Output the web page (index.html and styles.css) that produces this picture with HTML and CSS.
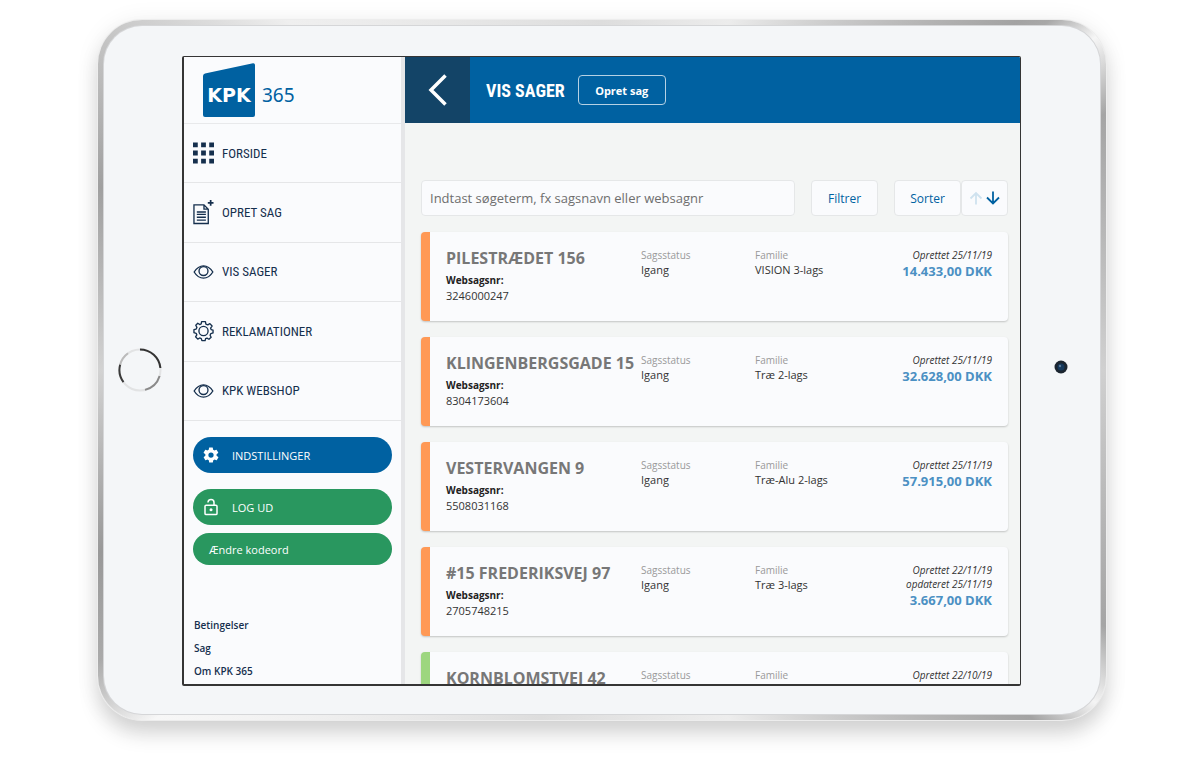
FILE: index.html
```html
<!DOCTYPE html>
<html lang="da">
<head>
<meta charset="utf-8">
<title>KPK 365 – Vis sager</title>
<link rel="stylesheet" href="styles.css">
</head>
<body>
<svg class="sprite" aria-hidden="true">
  <symbol id="eye" viewBox="0 0 22 22"><path d="M1.200 11C4 6.500 7.500 4.500 11 4.500S18 6.500 20.800 11C18 15.500 14.500 17.500 11 17.500S4 15.500 1.200 11Z"/><circle cx="11" cy="10" r="4.700"/></symbol>
</svg>
<div class="tablet">
  <div class="face">
    <div class="bezel-side">
      <svg class="home" viewBox="0 0 44 44" aria-hidden="true">
        <circle cx="22" cy="22" r="20.500" stroke="#e2e3e4"/>
        <path d="M22 1.500A20.500 20.500 0 0 1 42.400 20" stroke="#333"/>
        <path d="M41.600 28A20.500 20.500 0 0 1 27 41.900" stroke="#8a8a8a"/>
        <path d="M5.500 34.200A20.500 20.500 0 0 1 2.200 16.500" stroke="#3a3a3a"/>
        <path d="M2.200 16.500A20.500 20.500 0 0 1 10 5.300" stroke="#bbb"/>
      </svg>
    </div>
    <div class="screen">
      <aside class="sidebar">
        <div class="side-content">
          <a class="brand" href="#">
            <svg class="logo" viewBox="0 0 52 54" role="img" aria-label="KPK">
              <path d="M2 10.500L50 .200Q52 0 52 2V52Q52 54 50 54H2Q0 54 0 52V13Q0 11 2 10.500Z" fill="#0061a1"/>
              <text class="logo-text" x="26" y="39" text-anchor="middle">KPK</text>
            </svg>
            <span class="brand-number">365</span>
          </a>
          <nav class="nav">
            <a href="#"><svg class="icon solid" viewBox="0 0 22 22"><path d="M0 0h5v5H0zM8.500 0h5v5h-5zM17 0h5v5h-5zM0 8.500h5v5H0zM8.500 8.500h5v5h-5zM17 8.500h5v5h-5zM0 17h5v5H0zM8.500 17h5v5h-5zM17 17h5v5h-5z"/></svg>Forside</a>
            <a href="#"><svg class="icon tall" viewBox="0 0 22 26"><path d="M1 5H11.500L16 9.500V24.500H1ZM11.500 5V9.500H16"/><path d="M4 12.500H13.500M4 15H13.500M4 18H13.500M4 21H13.500"/><path class="plus" d="M18.500 0V6M15.500 3H21.500"/></svg>Opret sag</a>
            <a href="#"><svg class="icon"><use href="#eye"/></svg>Vis sager</a>
            <a href="#"><svg class="icon" viewBox="0 0 22 22"><path d="M9 1.200H13L13.500 3.700L15.500 4.600L17.700 3.300L20 5.800L18.400 7.900L19 9.500L21 10V13L18.700 13.700L17.900 15.400L19 17.500L16.700 19.600L14.700 18.400L13.200 19L12.700 21H9.300L8.700 19L7 18.300L5 19.500L2.700 17.100L4 15L3.300 13.500L1 12.800V9.500L3.300 9L4.100 7.200L2.900 5L5 2.900L7 4.200L8.600 3.600Z" stroke-linejoin="round"/><circle cx="11" cy="11" r="4.800"/></svg>Reklamationer</a>
            <a href="#"><svg class="icon"><use href="#eye"/></svg>KPK webshop</a>
          </nav>
          <div class="actions">
            <button class="pill settings" type="button"><svg viewBox="0 0 24 24"><path d="M19.400 13a7.500 7.500 0 0 0 0-2l2.100-1.700a.5.5 0 0 0 .1-.6l-2-3.500a.5.5 0 0 0-.6-.2l-2.500 1a7.300 7.300 0 0 0-1.700-1L14.400 2.400a.5.5 0 0 0-.5-.4h-4a.5.5 0 0 0-.5.4L9 5a7.700 7.700 0 0 0-1.700 1l-2.500-1a.5.5 0 0 0-.6.200l-2 3.500a.5.5 0 0 0 .1.600L4.500 11a7.900 7.900 0 0 0 0 2l-2.100 1.700a.5.5 0 0 0-.1.600l2 3.500c.1.200.4.300.6.200l2.500-1a7.300 7.300 0 0 0 1.700 1l.4 2.600c0 .2.200.4.500.4h4c.2 0 .5-.2.5-.4L15 19a7.700 7.700 0 0 0 1.700-1l2.500 1c.2.100.5 0 .6-.2l2-3.500a.5.5 0 0 0-.1-.6ZM12 15.500a3.500 3.500 0 1 1 0-7 3.500 3.500 0 0 1 0 7Z" fill="#fff"/></svg>INDSTILLINGER</button>
            <button class="pill logout" type="button"><svg viewBox="0 0 24 24" fill="none" stroke="#fff" stroke-width="2"><rect x="4" y="9.500" width="16" height="12.500" rx="1.500"/><path d="M8 6V5.500Q8.500 2 12 2Q16 2 16 6V9.500"/><circle cx="12" cy="15.800" r="2" fill="#fff" stroke="none"/></svg>LOG UD</button>
            <button class="pill password" type="button">Ændre kodeord</button>
          </div>
          <div class="links">
            <a href="#">Betingelser</a>
            <a href="#">Sag</a>
            <a href="#">Om KPK 365</a>
          </div>
        </div>
        <div class="scroll-thumb"></div>
      </aside>
      <main class="main">
        <header class="topbar">
          <button class="back" type="button" aria-label="Tilbage"><svg viewBox="0 0 20 32"><path d="M17.500 1.500L3 16L17.500 30.500" fill="none" stroke="#fff" stroke-width="3.500"/></svg></button>
          <h1>VIS SAGER</h1>
          <button class="create" type="button">Opret sag</button>
        </header>
        <div class="content">
          <form class="tools">
            <input class="search" type="text" aria-label="Søg" placeholder="Indtast søgeterm, fx sagsnavn eller websagnr">
            <button class="tool" type="button">Filtrer</button>
            <div class="sort">
              <button class="tool" type="button">Sorter</button>
              <button class="tool arrows" type="button" aria-label="Skift sortering"><svg viewBox="0 0 32 14" fill="none" stroke-width="1.800"><path d="M7 13.500V2M1.500 7.500L7 2L12.500 7.500" stroke="#cfe2ef"/><path d="M24 .500V12M18 6.500L24 12.500L30 6.500" stroke="#0061a1"/></svg></button>
            </div>
          </form>
          <article class="card">
            <div><h2>PILESTRÆDET 156</h2><b>Websagsnr:</b><p>3246000247</p></div>
            <div class="info"><span>Sagsstatus</span><p>Igang</p></div>
            <div class="info"><span>Familie</span><p>VISION 3-lags</p></div>
            <div class="sum"><em>Oprettet 25/11/19</em><strong>14.433,00 DKK</strong></div>
          </article>
          <article class="card">
            <div><h2>KLINGENBERGSGADE 15</h2><b>Websagsnr:</b><p>8304173604</p></div>
            <div class="info"><span>Sagsstatus</span><p>Igang</p></div>
            <div class="info"><span>Familie</span><p>Træ 2-lags</p></div>
            <div class="sum"><em>Oprettet 25/11/19</em><strong>32.628,00 DKK</strong></div>
          </article>
          <article class="card">
            <div><h2>VESTERVANGEN 9</h2><b>Websagsnr:</b><p>5508031168</p></div>
            <div class="info"><span>Sagsstatus</span><p>Igang</p></div>
            <div class="info"><span>Familie</span><p>Træ-Alu 2-lags</p></div>
            <div class="sum"><em>Oprettet 25/11/19</em><strong>57.915,00 DKK</strong></div>
          </article>
          <article class="card">
            <div><h2>#15 FREDERIKSVEJ 97</h2><b>Websagsnr:</b><p>2705748215</p></div>
            <div class="info"><span>Sagsstatus</span><p>Igang</p></div>
            <div class="info"><span>Familie</span><p>Træ 3-lags</p></div>
            <div class="sum"><em>Oprettet 22/11/19</em><em>opdateret 25/11/19</em><strong>3.667,00 DKK</strong></div>
          </article>
          <article class="card done">
            <div><h2>KORNBLOMSTVEJ 42</h2></div>
            <div class="info"><span>Sagsstatus</span></div>
            <div class="info"><span>Familie</span></div>
            <div class="sum"><em>Oprettet 22/10/19</em></div>
          </article>
        </div>
      </main>
    </div>
    <div class="bezel-side">
      <svg class="camera" viewBox="0 0 14 14" aria-hidden="true"><circle cx="7" cy="7" r="6.500" fill="#1b2530"/><circle cx="7" cy="7" r="3.500" fill="#14385c"/><circle cx="6" cy="6" r="1.200" fill="#5d7b98"/></svg>
    </div>
  </div>
</div>
</body>
</html>
```
FILE: styles.css
```css
* { box-sizing: border-box; }
body {
  margin: 0;
  height: 100vh;
  padding: 20px 94px 51px 98px;
  background: #fff;
  font-family: "Open Sans", "Noto Sans", sans-serif;
  font-size: 12px;
  color: #333;
}
h1, h2, p { margin: 0; }
a { color: inherit; text-decoration: none; }
button { font: inherit; cursor: pointer; }
.sprite { display: none; }

.tablet {
  height: 100%;
  padding: 6px;
  border-radius: 44px;
  background: conic-gradient(from 0deg, #ddd 0deg, #ececec 20deg, #a3a3a3 50deg, #a8a8a8 52deg, #f6f6f6 56deg, #a5a5a5 63deg, #d0d0d0 90deg, #a5a5a5 117deg, #f4f4f4 124deg, #a3a3a3 129deg, #ededed 160deg, #ddd 190deg, #f7f7f7 232deg, #aaa 240deg, #999 250deg, #d2d2d2 270deg, #a0a0a0 290deg, #c5c5c5 304deg, #efefef 318deg, #ddd 360deg);
  box-shadow: 0 0 0 1px #ededed, 0 2px 26px rgba(0, 0, 0, .07), 0 14px 20px rgba(0, 0, 0, .15);
}
.face {
  display: grid;
  grid-template-columns: 78px minmax(0, 1fr) 79px;
  height: 100%;
  padding: 30px 0 28px;
  border-radius: 38px;
  background: #f4f6f8;
  box-shadow: 0 0 0 1px #d5d6d8;
}
.bezel-side { display: flex; align-items: center; justify-content: center; }
.home { width: 44px; height: 44px; margin: 0 6px 2px 0; fill: none; stroke-width: 2; }
.camera { width: 14px; height: 14px; margin-bottom: 8px; }
.screen {
  display: grid;
  grid-template-columns: 221px minmax(0, 1fr);
  min-height: 0;
  overflow: hidden;
  border: solid #353535;
  border-width: 1px 1px 2px 2px;
  border-radius: 2px;
  background: #f3f5f4;
}

.sidebar { display: flex; min-height: 0; background: #fafbfd; }
.side-content { flex: 1; }
.scroll-thumb { width: 4px; height: calc(100% - 36px); background: #e5e6e8; border-radius: 0 0 2px 2px; }
.brand {
  display: flex;
  align-items: center;
  gap: 7px;
  height: 67px;
  padding-left: 19px;
  border-bottom: 1px solid #e8e9eb;
}
.logo { width: 52px; height: 54px; }
.logo-text { font: bold 19px "DejaVu Sans", sans-serif; fill: #fff; }
.brand-number { padding-top: 10px; font: 19px "Noto Sans", sans-serif; color: #0061a1; }
.nav { display: grid; grid-auto-rows: 1fr; min-height: 297px; }
.nav a {
  display: flex;
  align-items: center;
  gap: 8px;
  padding-left: 9px;
  border-bottom: 1px solid #e5e6e8;
  color: #152f4d;
  font: 13px "Liberation Sans Narrow", "Roboto Condensed", "Open Sans", sans-serif;
  text-transform: uppercase;
}
.icon { flex: none; width: 21px; height: 22px; fill: none; stroke: #152f4d; stroke-width: 1.400; }
.tall { height: 25px; }
.solid { fill: #152f4d; stroke: none; }
.plus { stroke-width: 1.800; }
.actions { display: flex; flex-direction: column; gap: 8px; padding: 16px 9px 0; font-size: 11px; }
.pill {
  display: flex;
  align-items: center;
  gap: 12px;
  height: 36px;
  padding: 0 9px;
  border: 0;
  border-radius: 18px;
  background: #29975f;
  color: #fff;
}
.pill svg { width: 18px; height: 18px; }
.settings { margin-bottom: 8px; background: #0061a1; }
.password { height: 32px; padding-left: 16px; }
.links {
  display: flex;
  flex-direction: column;
  gap: 7px;
  padding: 52px 10px 0;
  font-size: 10px;
  line-height: 16px;
  font-weight: 600;
  color: #152f4d;
}

.main { min-width: 0; }
.topbar { display: flex; align-items: center; height: 66px; background: #0061a1; color: #fff; }
.back { display: flex; align-items: center; justify-content: center; width: 65px; height: 100%; border: 0; background: #134467; }
.back svg { width: 20px; height: 32px; }
.topbar h1 { margin: 0 13px 0 16px; font: bold 18px "Liberation Sans Narrow", "Roboto Condensed", "Open Sans", sans-serif; }
.create { width: 88px; height: 30px; padding: 0; border: 1px solid #b5d1e4; border-radius: 4px; background: none; color: #fff; font-size: 11px; font-weight: 700; }
.content { padding: 57px 12px 0 16px; }
.tools { display: flex; gap: 16px; margin-bottom: 16px; }
.search {
  flex: 1;
  min-width: 0;
  height: 36px;
  padding: 0 8px;
  border: 1px solid #e5e7e8;
  border-radius: 4px;
  background: #fafbfd;
  font: 13px "Open Sans", sans-serif;
}
.search::placeholder { color: #6e6e6e; opacity: 1; }
.tool { width: 67px; height: 36px; padding: 0; border: 1px solid #e5e7e8; border-radius: 4px; background: #fafbfd; color: #0061a1; }
.sort { display: flex; }
.arrows { display: flex; align-items: center; justify-content: center; width: 47px; }
.arrows svg { width: 32px; height: 14px; }
.card {
  display: grid;
  grid-template-columns: minmax(0, 195fr) minmax(0, 114fr) minmax(0, 117fr) minmax(0, 120fr);
  height: 89px;
  margin-bottom: 16px;
  padding: 16px 16px 0;
  border-left: 9px solid #ff9955;
  border-radius: 4px;
  background: #fafbfd;
  box-shadow: 0 1px 2px rgba(0, 0, 0, .2);
  line-height: 16px;
}
.done { border-color: #9dd67f; }
.card h2 { margin-bottom: 4px; font-size: 16px; line-height: 20px; color: #777; white-space: nowrap; }
.card b { display: block; font-size: 10px; color: #222; }
.card p { font-size: 11px; }
.info span { display: block; font-size: 10px; line-height: 14px; color: #999; }
.sum { display: flex; flex-direction: column; text-align: right; white-space: nowrap; }
.sum em { font-size: 10px; line-height: 14px; }
.sum strong { font-size: 13px; line-height: 18px; color: #4b90c3; }
```
